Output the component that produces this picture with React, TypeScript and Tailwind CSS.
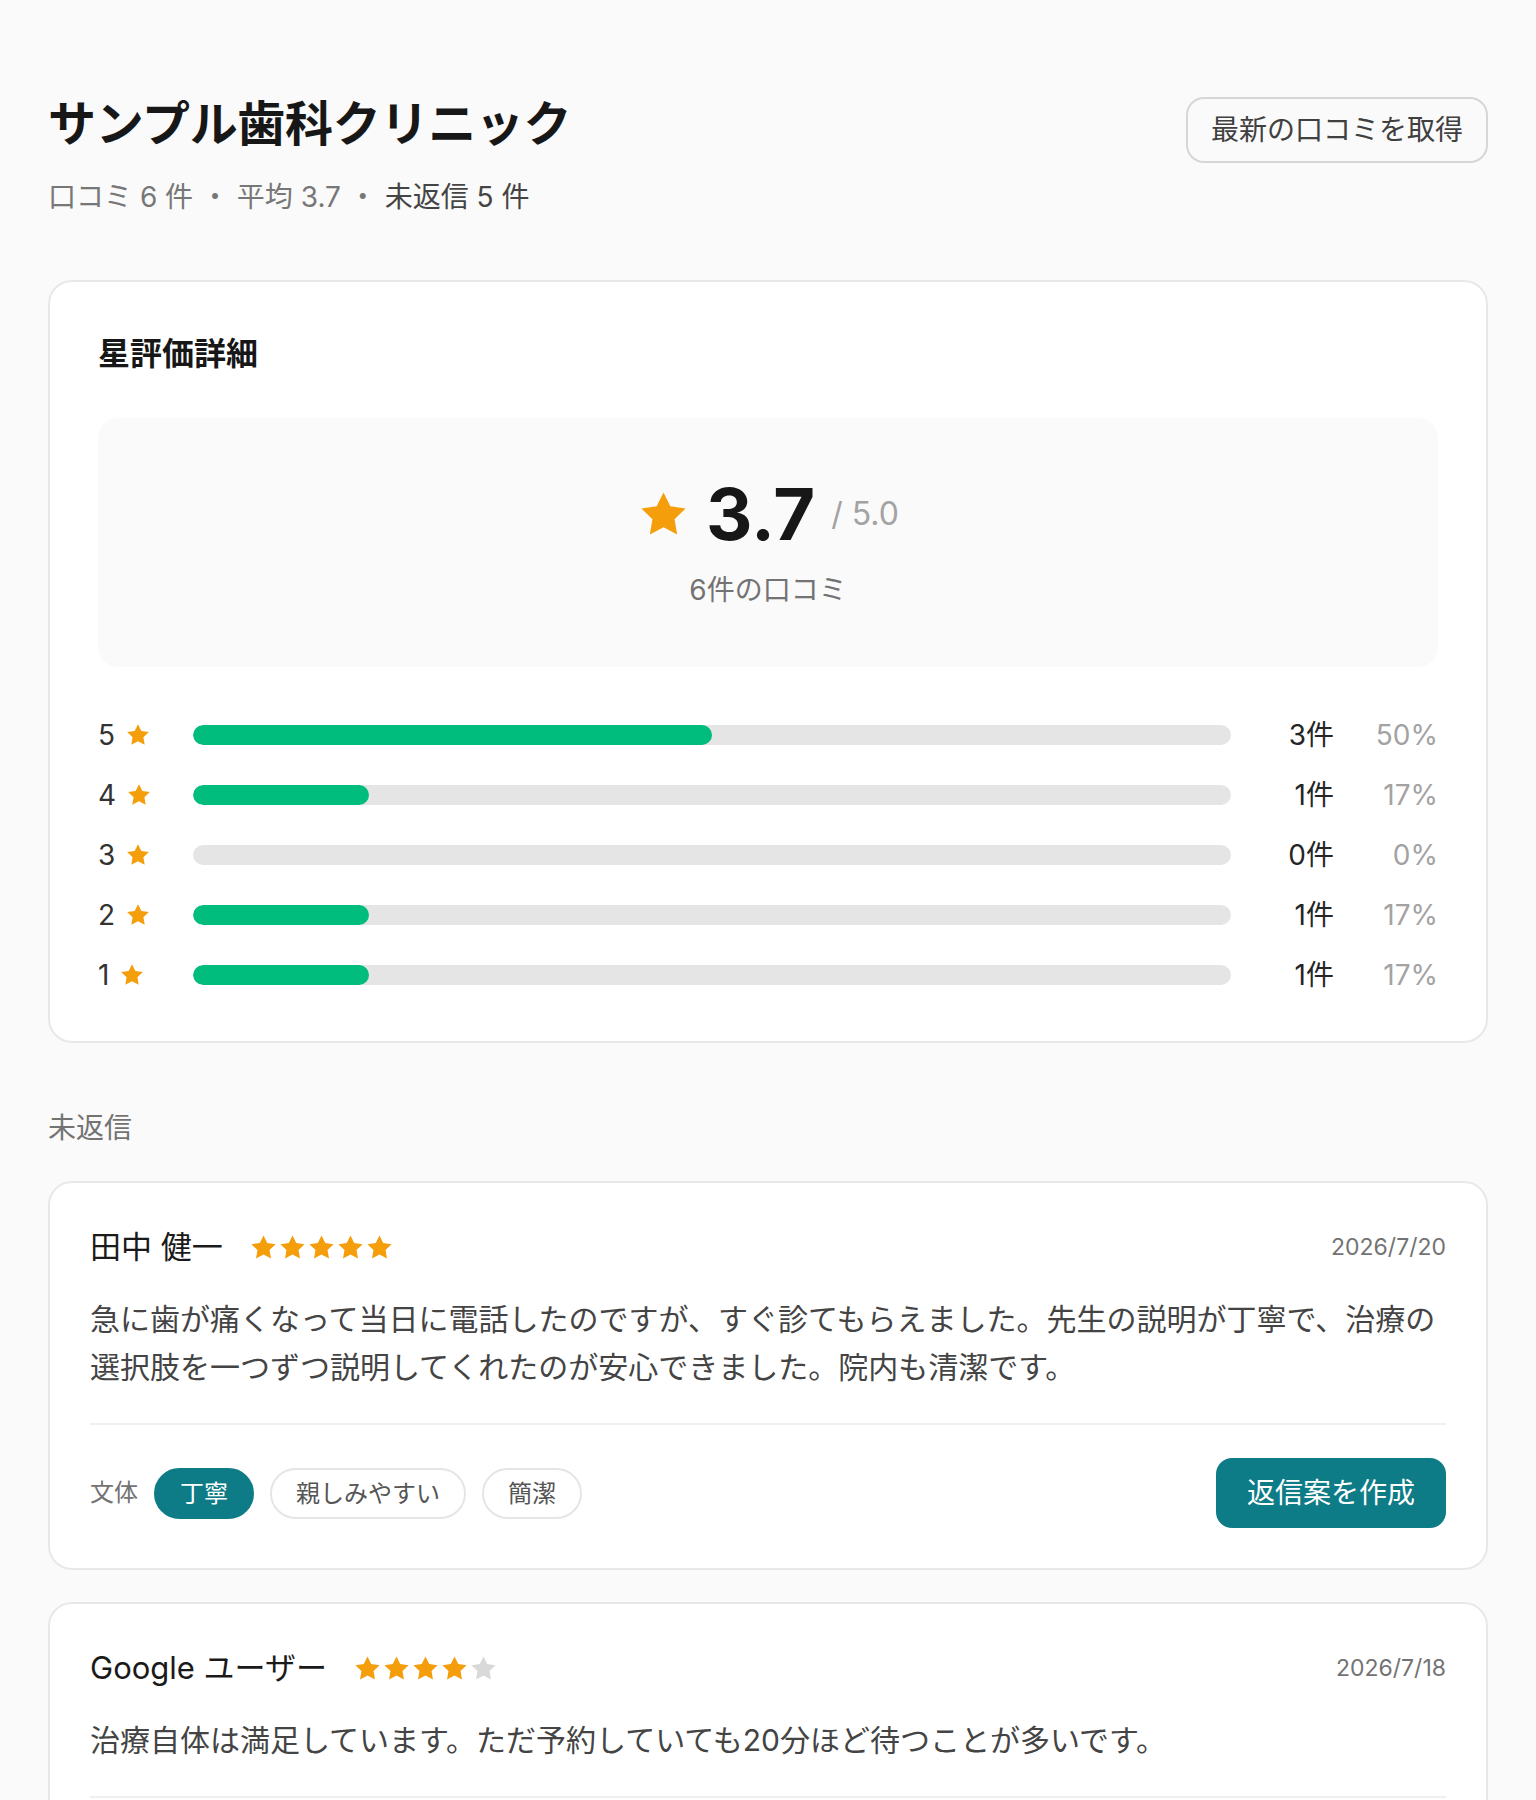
import { useState } from "react";

type Review = {
  id: number;
  author: string;
  rating: number;
  date: string;
  body: string;
};

const reviews: Review[] = [
  {
    id: 1,
    author: "田中 健一",
    rating: 5,
    date: "2026/7/20",
    body: "急に歯が痛くなって当日に電話したのですが、すぐ診てもらえました。先生の説明が丁寧で、治療の選択肢を一つずつ説明してくれたのが安心できました。院内も清潔です。",
  },
  {
    id: 2,
    author: "Google ユーザー",
    rating: 4,
    date: "2026/7/18",
    body: "治療自体は満足しています。ただ予約していても20分ほど待つことが多いです。",
  },
];

const breakdown = [
  { stars: 5, count: 3 },
  { stars: 4, count: 1 },
  { stars: 3, count: 0 },
  { stars: 2, count: 1 },
  { stars: 1, count: 1 },
];

const tones = ["丁寧", "親しみやすい", "簡潔"];

const Star = ({ size, className }: { size: number; className: string }) => (
  <svg width={size} height={size} viewBox="0 0 24 24" className={className}>
    <polygon points="12,2 15.09,8.26 22,9.27 17,14.14 18.18,21.02 12,17.77 5.82,21.02 7,14.14 2,9.27 8.91,8.26" fill="currentColor" />
  </svg>
);

const ReviewCard = ({ review }: { review: Review }) => {
  const [tone, setTone] = useState("丁寧");
  return (
    <div className="bg-white border-2 border-[#e8e8e8] rounded-[24px] px-[40px] pt-[40px] pb-[40px]">
      {/* Author row */}
      <div className="flex items-center h-[48px]">
        <span className="text-[31px] text-[#1a1a1a]">{review.author}</span>
        <div className="flex ml-[26px]">
          {[1, 2, 3, 4, 5].map((i) => (
            <Star key={i} size={29} className={i <= review.rating ? "text-[#f59e0b]" : "text-[#d9d9d9]"} />
          ))}
        </div>
        <span className="ml-auto text-[23px] text-[#737373]">{review.date}</span>
      </div>

      <p className="mt-[24px] text-[30px] leading-[48px] text-[#444]">{review.body}</p>

      {/* Tone + action */}
      <div className="mt-[32px] border-t-2 border-[#f0f0f0] pt-[33px] flex items-center justify-between">
        <div className="flex items-center gap-[16px]">
          <span className="text-[24px] text-[#737373]">文体</span>
          {tones.map((t) => (
            <button
              key={t}
              onClick={() => setTone(t)}
              className={
                tone === t
                  ? "px-[24px] py-[6px] text-[24px] leading-[35px] rounded-full border-2 border-[#0e7c86] bg-[#0e7c86] text-white"
                  : "px-[24px] py-[6px] text-[24px] leading-[35px] rounded-full border-2 border-[#e5e5e5] bg-white text-[#555]"
              }
            >
              {t}
            </button>
          ))}
        </div>
        <button className="px-[31px] py-[14px] text-[28px] leading-[42px] rounded-[16px] bg-[#0e7c86] text-white">
          返信案を作成
        </button>
      </div>
    </div>
  );
};

export default function App() {
  const total = breakdown.reduce((s, b) => s + b.count, 0);

  return (
    <div className="min-h-screen bg-[#fafafa] px-12 pt-[92px] pb-[96px] font-[Inter,'Noto_Sans_CJK_JP',sans-serif]">
      {/* Header */}
      <div className="flex items-start justify-between mb-[62px]">
        <div>
          <h1 className="text-[48px] leading-[64px] font-bold text-[#171717] tracking-[-0.3px]">
            サンプル歯科クリニック
          </h1>
          <p className="mt-[20px] text-[28px] leading-[42px] text-[#777]">
            口コミ 6 件 ・ 平均 3.7 ・ <span className="text-[#444]">未返信 5 件</span>
          </p>
        </div>
        <button className="mt-[5px] px-[23px] py-[10px] text-[28px] leading-[42px] text-[#404040] border-2 border-[#d6d6d6] rounded-[18px] bg-[#fafafa]">
          最新の口コミを取得
        </button>
      </div>

      {/* Rating breakdown */}
      <div className="bg-white border-2 border-[#e8e8e8] rounded-[24px] p-[48px] pb-[46px]">
        <h2 className="text-[32px] leading-[48px] font-bold text-[#171717]">星評価詳細</h2>

        <div className="mt-[40px] bg-[#fafafa] rounded-[20px] py-[56px] flex flex-col items-center">
          <div className="flex items-center justify-center gap-4 h-[80px]">
            <Star size={53} className="text-[#f59e0b]" />
            <span className="text-[72px] font-bold text-[#171717] leading-none">3.7</span>
            <span className="text-[32px] text-[#a3a3a3]">/ 5.0</span>
          </div>
          <p className="mt-[15px] text-[28px] leading-[42px] text-[#737373]">6件の口コミ</p>
        </div>

        <div className="mt-[48px] flex flex-col gap-[20px]">
          {breakdown.map((b) => {
            const pct = total ? Math.round((b.count / total) * 100) : 0;
            return (
              <div key={b.stars} className="flex items-center gap-6 h-[40px] text-[28px]">
                <div className="w-[71px] flex items-center gap-[10px] text-[#333]">
                  <span>{b.stars}</span>
                  <Star size={26} className="text-[#f59e0b]" />
                </div>
                <div className="flex-1 h-[20px] rounded-full bg-[#e5e5e5] overflow-hidden">
                  <div className="h-full rounded-full bg-emerald-500" style={{ width: `${pct}%` }} />
                </div>
                <div className="w-[79px] text-right text-[#262626]">{b.count}件</div>
                <div className="w-[80px] text-right text-[#a3a3a3]">{pct}%</div>
              </div>
            );
          })}
        </div>
      </div>

      {/* Unreplied */}
      <h3 className="mt-[64px] mb-[32px] text-[28px] leading-[42px] text-[#737373]">未返信</h3>
      <div className="flex flex-col gap-[32px]">
        {reviews.map((r) => (
          <ReviewCard key={r.id} review={r} />
        ))}
      </div>
    </div>
  );
}
